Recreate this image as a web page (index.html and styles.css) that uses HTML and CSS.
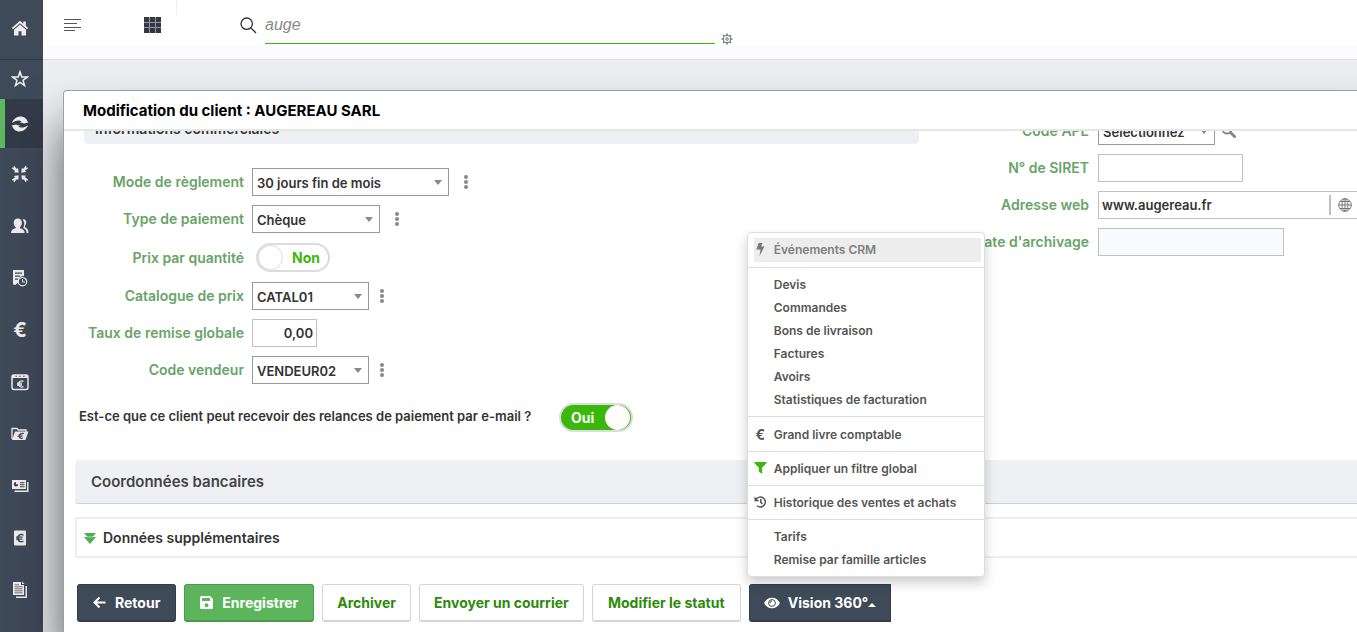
FILE: index.html
```html
<!DOCTYPE html>
<html lang="fr">
<head>
<meta charset="utf-8">
<title>Modification du client : AUGEREAU SARL</title>
<link rel="stylesheet" href="styles.css">
</head>
<body>
<div class="app">
  <nav class="sidebar" aria-label="Menu principal">
    <a href="#" class="side-link side-home" aria-label="Accueil"><svg width="18" height="16" viewBox="0 0 18 16"><path d="M9 .8.800 8l1.200 1.300L9 3.200l7 6.100L17.200 8 14.800 5.900V1.500h-2.500v2.200z"/><path d="M9 4.600 3 9.800V15.500h4.500v-4.300h3v4.300H15V9.800z"/></svg></a>
    <a href="#" class="side-link side-star" aria-label="Favoris"><svg width="18" height="18" viewBox="0 0 18 18"><path fill="none" stroke="currentColor" stroke-width="1.500" d="m9 1.800 1.800 5.100 5.500.1-4.300 3.300 1.500 5.200L9 12.400l-4.500 3.100L6 10.300 1.700 7l5.500-.1z"/></svg></a>
    <a href="#" class="side-link side-active" aria-label="Actualiser"><svg width="20" height="18" viewBox="0 0 20 18"><path d="M2 8C3.500 3.500 8 .8 12.500 1.800c2.700.6 4.300 2.300 5 4.700l1.300.8-4.300 1.200-5-1.300 2.300-.7C9.500 4.700 5.500 5 2 8z"/><path d="M18 10c-1.500 4.500-6 7.200-10.500 6.200-2.700-.6-4.300-2.300-5-4.700l-1.300-.8 4.300-1.200 5 1.300-2.300.7c2.300 1.800 6.300 1.500 9.800-1.500z"/></svg></a>
    <a href="#" class="side-link" aria-label="Regrouper"><svg width="18" height="18" viewBox="0 0 18 18"><g id="arrow"><path d="M7.700 7.700 2.800 7.200l1.300-1.300L.8 3.300l.5-.8 1.400.3-.2-1.500.8-.4 2.500 3.200L7 2.900z"/></g><use href="#arrow" transform="rotate(90 9 9)"/><use href="#arrow" transform="rotate(180 9 9)"/><use href="#arrow" transform="rotate(270 9 9)"/></svg></a>
    <a href="#" class="side-link" aria-label="Tiers"><svg width="18" height="16" viewBox="0 0 18 16"><path d="M11.500 1.500c2.500-.6 4 1 3.700 3.500-.1 1.200-.6 2-1.200 2.700v1.500c2 .8 3.400 2.300 3.600 5.800h-2c-.2-2.500-1.500-4.200-3.500-5.200 1.500-2.300 1.800-6-.6-8.300z"/><path d="M6.800.5c2.600 0 4.100 1.700 4.100 4.200 0 2-1 3.600-2 4.500v1c2.700.7 4.600 1.700 4.800 4.800H0c.2-3.100 2-4.100 4.700-4.800v-1c-1.100-.9-2-2.500-2-4.500C2.700 2.200 4.200.5 6.800.5z"/></svg></a>
    <a href="#" class="side-link" aria-label="Échéances"><svg width="16" height="18" viewBox="0 0 16 18"><path fill-rule="evenodd" d="M1 1h11v6c-4 0-6 2.500-5.700 6L5 14.500 3.500 16 1 15.500zM3 3.500v1.200h7V3.500zm0 3v1.200h5V6.500zm0 3v1.200h3V9.500z"/><circle cx="10.500" cy="12.700" r="4.200" fill="none" stroke="currentColor" stroke-width="1.200"/><path d="M10.500 10v3h2.500" fill="none" stroke="currentColor"/></svg></a>
    <a href="#" class="side-link side-euro" aria-label="Règlements">€</a>
    <a href="#" class="side-link" aria-label="Échéancier"><svg width="18" height="18" viewBox="0 0 18 18"><rect x="1" y="2" width="16" height="14.500" rx="2" fill="none" stroke="currentColor" stroke-width="1.500"/><path fill-rule="evenodd" d="M1 2h16v3H1zm3.500.3v1.500H6V2.300zm3.800 0v1.500h1.500V2.300zm3.800 0v1.500h1.500V2.300z"/><path d="M12.500 8.300c-2.300-1-4.800 0-4.800 2.700s2.500 3.700 4.800 2.700M6 10.200h5.200M6 12h5" fill="none" stroke="currentColor" stroke-width="1.300"/></svg></a>
    <a href="#" class="side-link" aria-label="Dossiers"><svg width="18" height="14" viewBox="0 0 18 14"><path fill="none" stroke="currentColor" stroke-width="1.300" d="M1 12V1.500h5L7.500 3H15v2"/><path fill-rule="evenodd" d="M4 4.500h13.500L14.500 13H1zm9 1.500c-2.500-.8-4.500.2-5 1.800H7v.8h.8v.6H6.500v.8h1.300c.4 1.800 2 2.300 4 1.700v-1.200c-1.200.5-2.200.3-2.500-.5h2l.2-.8H9.200v-.6h2.500l.2-.8H9.500c.5-.8 1.800-1.200 3.200-.7z"/></svg></a>
    <a href="#" class="side-link" aria-label="Fiches"><svg width="18" height="14" viewBox="0 0 18 14"><path fill-rule="evenodd" d="M1 1h14v9H1zm4 2a2.300 2.300 0 1 0 2.300 2.300H5zm4 .3v1h4.500v-1zm0 2v1h4.500v-1zm0 2v1h4.500v-1z"/><path d="M3.500 12.200h13.300V3" fill="none" stroke="currentColor" stroke-width="1.500"/></svg></a>
    <a href="#" class="side-link" aria-label="Factures"><svg width="14" height="18" viewBox="0 0 14 18"><path fill-rule="evenodd" d="M2 1.500h10a1 1 0 0 1 1 1v13a1 1 0 0 1-1 1H2a1 1 0 0 1-1-1v-13a1 1 0 0 1 1-1zm8.500 3.700C7.500 4 5 5.500 4.400 7.500H3v1.200h1.200v.8H3v1.200h1.400C5 13 7.700 14.200 10.500 13v-1.600c-2 .9-3.700.6-4.300-.7h3.200V9.500H6v-.8h3.700V7.500H6.200c.7-1.300 2.300-1.600 4.300-.7z"/></svg></a>
    <a href="#" class="side-link" aria-label="Documents"><svg width="16" height="18" viewBox="0 0 16 18"><path fill-rule="evenodd" d="M1 1h8v3h3v10H1zm1.500 2.500v.8H7v-.8zm0 2v.8h8v-.8zm0 2v.8h8v-.8zm0 2v.8h8v-.8zm0 2v.8h8v-.8z"/><path d="M10 .5 12.500 3H10z"/><path d="M4 16.300h10.200V5" fill="none" stroke="currentColor" stroke-width="1.500"/></svg></a>
  </nav>

  <div class="main">
    <header class="topbar">
      <button class="icon-button burger" aria-label="Replier le menu"><svg width="18" height="14" viewBox="0 0 18 14"><path d="M0 1.500h17M0 5.500h13M0 9.500h17M0 12.500h11" stroke="#555" stroke-width="1"/></svg></button>
      <button class="icon-button apps" aria-label="Applications"><svg width="17" height="16" viewBox="0 0 17 16"><path fill="#8d98a8" d="M0 0h17v16H0z"/><path fill="#35383f" d="M0 0h5v5H0zM6 0h5v5H6zM12 0h5v5h-5zM0 6h5v4H0zM6 6h5v4H6zM12 6h5v4h-5zM0 11h5v5H0zM6 11h5v5H6zM12 11h5v5h-5z"/></svg></button>
      <span class="divider"></span>
      <label class="search-label" for="search" aria-label="Rechercher"><svg width="17" height="17" viewBox="0 0 17 17"><g fill="none" stroke="#333" stroke-width="1.300"><circle cx="6.700" cy="6.700" r="5.700"/><path d="m11 11 5 5"/></g></svg></label>
      <input id="search" class="search" type="text" value="auge">
      <button class="icon-button search-gear" aria-label="Options de recherche"><svg width="12" height="12" viewBox="0 0 12 12"><g fill="none" stroke="#6f7580"><circle cx="6" cy="6" r="3.800"/><circle cx="6" cy="6" r="1.300"/><path stroke-width="1.600" d="M6 .5v1.700M6 9.800v1.700M.5 6h1.700M9.800 6h1.700M2.100 2.100l1.200 1.200M8.700 8.700l1.200 1.200M9.900 2.100 8.700 3.300M3.300 8.700 2.100 9.900"/></g></svg></button>
    </header>

    <main class="modal">
      <h1 class="modal-title">Modification du client : AUGEREAU SARL</h1>
      <div class="modal-body">
        <div class="columns">
          <section class="col-left">
            <h2 class="subsection">Informations commerciales</h2>
            <div class="fields">
              <div class="row"><label class="label" for="mode">Mode de règlement</label><span class="select select-wide"><select id="mode"><option>30 jours fin de mois</option></select></span><button class="dots" aria-label="Options du mode"><i></i><i></i><i></i></button></div>
              <div class="row"><label class="label" for="type">Type de paiement</label><span class="select select-medium"><select id="type"><option>Chèque</option></select></span><button class="dots" aria-label="Options du type"><i></i><i></i><i></i></button></div>
              <div class="row row-toggle"><label class="label" for="quantite">Prix par quantité</label><label class="toggle toggle-off"><input type="checkbox" id="quantite"><span class="knob"></span><span class="toggle-text">Non</span></label></div>
              <div class="row"><label class="label" for="catalogue">Catalogue de prix</label><span class="select select-small"><select id="catalogue"><option>CATAL01</option></select></span><button class="dots" aria-label="Options du catalogue"><i></i><i></i><i></i></button></div>
              <div class="row"><label class="label" for="taux">Taux de remise globale</label><input id="taux" class="input input-rate" type="text" value="0,00"></div>
              <div class="row"><label class="label" for="vendeur">Code vendeur</label><span class="select select-small"><select id="vendeur"><option>VENDEUR02</option></select></span><button class="dots" aria-label="Options du vendeur"><i></i><i></i><i></i></button></div>
            </div>
          </section>
          <section class="col-right">
            <div class="row"><label class="label" for="ape">Code APE</label><span class="select select-small"><select id="ape"><option>Sélectionnez</option></select></span><button class="icon-button lookup" aria-label="Chercher un code"><svg width="16" height="16" viewBox="0 0 16 16"><circle cx="6" cy="6" r="4.500" fill="none" stroke="#888" stroke-width="2"/><path d="m9.500 9.500 4 4" stroke="#888" stroke-width="3" stroke-linecap="round"/></svg></button></div>
            <div class="row"><label class="label" for="siret">N° de SIRET</label><input id="siret" class="input input-siret" type="text"></div>
            <div class="row"><label class="label" for="web">Adresse web</label><span class="web"><input id="web" class="input input-web" type="text" value="www.augereau.fr"><a href="#" class="web-open" aria-label="Ouvrir le site"><svg width="14" height="14" viewBox="0 0 14 14"><g fill="none" stroke="#777"><circle cx="7" cy="7" r="6.300"/><ellipse cx="7" cy="7" rx="3" ry="6.300"/><path d="M.7 7h12.600M7 .7v12.600M2 3.500h10M2 10.500h10"/></g></svg></a></span></div>
            <div class="row"><label class="label" for="archive">Date d'archivage</label><input id="archive" class="input input-date" type="text" readonly></div>
          </section>
        </div>
        <div class="question"><label class="question-text" for="relance">Est-ce que ce client peut recevoir des relances de paiement par e-mail ?</label><label class="toggle toggle-on"><input type="checkbox" id="relance" checked><span class="toggle-text">Oui</span><span class="knob"></span></label></div>
        <h2 class="section">Coordonnées bancaires</h2>
        <button class="accordion"><svg width="12" height="12" viewBox="0 0 12 12"><path fill="#4caf50" d="M0 1h12L8.500 5H12l-6 7L0 5h3.500z"/><path stroke="#fff" stroke-width=".5" d="M3 5h6"/></svg>Données supplémentaires</button>
      </div>

      <footer class="actions">
        <button class="btn btn-icon btn-dark"><svg width="13" height="13" viewBox="0 0 13 13"><path d="M12.500 6.500H1.500M6.500 1.500l-5 5 5 5" fill="none" stroke="#fff" stroke-width="2"/></svg>Retour</button>
        <button class="btn btn-icon btn-green"><svg width="13" height="13" viewBox="0 0 13 13"><path fill="#fff" fill-rule="evenodd" d="M1.500 0H10l3 3v8.500A1.500 1.500 0 0 1 11.500 13h-10A1.500 1.500 0 0 1 0 11.500v-10A1.500 1.500 0 0 1 1.500 0zM2 2v3h8V2zm4.500 5.200a2 2 0 1 0 0 4 2 2 0 0 0 0-4z"/></svg>Enregistrer</button>
        <button class="btn">Archiver</button>
        <button class="btn">Envoyer un courrier</button>
        <button class="btn btn-status">Modifier le statut</button>
        <div class="dropdown">
          <button class="btn btn-dark btn-open" aria-expanded="true"><svg width="16" height="12" viewBox="0 0 16 12"><path fill="#fff" d="M0 6c2-3.500 4.700-5.200 8-5.200S14 2.500 16 6c-2 3.500-4.700 5.200-8 5.200S2 9.500 0 6z"/><circle cx="8" cy="6" r="3.400" fill="none" stroke="#3f4a59"/><path d="M6 6a2 2 0 0 1 2-2" fill="none" stroke="#3f4a59"/></svg>Vision 360°<span class="caret"></span></button>
          <div class="menu">
            <div class="menu-group"><a href="#" class="menu-item menu-hover"><svg width="10" height="13" viewBox="0 0 10 13"><path fill="#777" d="M3 0h4L5.700 3.500H9L4 13l1-6.500H1z"/></svg>Événements CRM</a></div>
            <div class="menu-group"><a href="#" class="menu-item">Devis</a><a href="#" class="menu-item">Commandes</a><a href="#" class="menu-item">Bons de livraison</a><a href="#" class="menu-item">Factures</a><a href="#" class="menu-item">Avoirs</a><a href="#" class="menu-item">Statistiques de facturation</a></div>
            <div class="menu-group menu-ledger"><a href="#" class="menu-item"><span class="menu-icon">€</span>Grand livre comptable</a></div>
            <div class="menu-group"><a href="#" class="menu-item"><svg width="12" height="12" viewBox="0 0 12 12"><path fill="#3ab80b" d="M0 0h12v1.200L7.700 5.500V12L4.300 9.500v-4L0 1.200z"/></svg>Appliquer un filtre global</a></div>
            <div class="menu-group"><a href="#" class="menu-item"><svg width="12" height="12" viewBox="0 0 12 12"><g fill="none" stroke="#555" stroke-width="1.500"><path d="M1.500 3.500A5 5 0 1 1 2.500 9.700M6.300 3v3.500L8 8"/></g><path fill="#555" d="M0 .5v4.800h4.800z"/></svg>Historique des ventes et achats</a></div>
            <div class="menu-group"><a href="#" class="menu-item">Tarifs</a><a href="#" class="menu-item">Remise par famille articles</a></div>
          </div>
        </div>
      </footer>
    </main>
  </div>
</div>
</body>
</html>
```
FILE: styles.css
```css
* { box-sizing: border-box; }
body {
  margin: 0;
  font-family: Inter, "Open Sans", sans-serif;
  font-size: 14px;
  color: #333;
  background: #edeef2;
}
button, input, select { font: inherit; color: inherit; margin: 0; }
button { cursor: pointer; }
a { color: inherit; text-decoration: none; }
svg { display: block; flex: none; }

.app { display: flex; min-height: 100vh; overflow: hidden; }

.sidebar { flex: 0 0 43px; background: #3f4a59; color: #eee; }
.side-link { display: flex; align-items: center; justify-content: center; height: 52px; padding-right: 3px; }
.side-link svg { fill: currentColor; }
.side-home { height: 60px; padding-bottom: 4px; border-bottom: 1px solid #343d4a; }
.side-star { height: 39px; padding-bottom: 2px; }
.side-active { height: 49px; background: #343b48; border-left: 5px solid #5cb85c; padding-right: 8px; }
.side-euro { font-size: 20px; font-weight: 700; }

.main { flex: 1; min-width: 0; display: flex; flex-direction: column; }
.topbar {
  display: flex;
  align-items: flex-start;
  height: 60px;
  background: linear-gradient(#fff 46px, #fcfcfc 46px);
  border-bottom: 1px solid #e0e0e0;
}
.icon-button { border: 0; padding: 0; background: none; }
.burger { margin: 18px 0 0 21px; }
.apps { margin: 17px 0 0 62px; }
.divider { width: 1px; height: 15px; margin-left: 15px; background: #eee; }
.search-label { margin: 17px 8px 0 63px; }
.search {
  width: 450px;
  height: 44px;
  padding: 6px 0 0;
  border: 0;
  border-bottom: 1px solid #3ab80b;
  outline: 0;
  background: none;
  color: #8a8a8a;
  font: italic 16px "Liberation Sans", sans-serif;
}
.search-gear { margin: 33px 0 0 6px; }

.modal {
  position: relative;
  flex: 1;
  margin: 30px -40px 0 20px;
  border: 1px solid #a0a0a0;
  border-bottom: 0;
  border-radius: 4px 4px 0 0;
  background: #fff;
  box-shadow: 0 35px 50px rgba(0, 0, 0, .65);
}
.modal-title {
  margin: 0;
  height: 40px;
  padding-left: 19px;
  border-bottom: 2px solid #e6e6e6;
  font-size: 15px;
  line-height: 39px;
  font-weight: 700;
  color: #000;
}
.modal-body { overflow: hidden; padding: 0 11px; }
.columns { display: grid; grid-template-columns: 645fr 356fr; margin-top: -23px; }
.col-left { padding-left: 9px; }
.col-right { padding-top: 9px; display: flex; flex-direction: column; gap: 9px; }
.subsection {
  margin: 0 0 24px;
  height: 36px;
  padding: 6px 11px 0;
  border-radius: 4px;
  background: #eff0f4;
  font-size: 14px;
  line-height: 30px;
  font-weight: 600;
}
.fields { display: flex; flex-direction: column; gap: 9px; }
.row { display: flex; align-items: center; height: 28px; }
.row-toggle { height: 31px; }
.label { flex: 0 0 160px; margin-right: 8px; padding-bottom: 1px; text-align: right; font-weight: 600; color: #68a468; }
.col-right .label { flex-basis: 170px; margin-right: 9px; }

.select { position: relative; display: block; height: 28px; }
.select select {
  width: 100%;
  height: 100%;
  padding: 1px 24px 0 4px;
  appearance: none;
  border: 1px solid #999;
  border-radius: 0;
  background: #fff;
  font-size: 13px;
  font-weight: 600;
  text-overflow: clip;
}
.select::after {
  content: "";
  position: absolute;
  right: 7px;
  top: 12px;
  border: 4px solid transparent;
  border-top: 5px solid #888;
  border-bottom: 0;
  pointer-events: none;
}
.select-wide { width: 197px; }
.select-medium { width: 128px; }
.select-small { width: 117px; }
.col-right .select select { padding-right: 16px; }
.dots { display: flex; flex-direction: column; gap: 1px; margin-left: 15px; padding: 0; border: 0; background: none; }
.select-small + .dots { margin-left: 11px; }
.dots i { width: 4px; height: 4px; border-radius: 2px; background: #888; }
.lookup { margin-left: 6px; }

.input { height: 28px; padding: 0 4px; border: 1px solid #c0c0c0; border-radius: 0; background: #fff; font-size: 13px; font-weight: 600; outline: 0; }
.input-rate { width: 65px; padding-right: 3px; text-align: right; }
.input-siret { width: 145px; }
.input-date { width: 186px; background: #f9fafd; }
.web { display: flex; align-items: center; width: 262px; height: 28px; border: 1px solid #c0c0c0; }
.input-web { width: 230px; height: 26px; border: 0; padding: 0 3px; }
.web-open { padding: 3px 0 3px 7px; border-left: 2px solid #c0c0c0; }

.toggle { display: flex; align-items: center; justify-content: space-between; height: 29px; width: 74px; border: 2px solid #dcdcdc; border-radius: 15px; font-weight: 700; }
.toggle input { position: absolute; opacity: 0; width: 1px; height: 1px; }
.knob { width: 25px; height: 25px; border-radius: 50%; background: #fff; }
.toggle-off { margin-left: 4px; background: #fff; color: #3ab80b; padding-right: 8px; }
.toggle-off .knob { border: 1px solid #dcdcdc; }
.toggle-on { background: #3ab80b; color: #fff; padding: 0 1px 0 10px; }

.question { display: flex; align-items: center; height: 29px; margin: 19px 0 28px 4px; }
.question-text { min-width: 480px; padding-bottom: 4px; font-size: 13px; font-weight: 600; }
.section {
  margin: 0;
  height: 44px;
  padding-left: 16px;
  border-bottom: 1px solid #d0d0d0;
  border-radius: 4px;
  background: #eff0f4;
  font-size: 15px;
  line-height: 44px;
  font-weight: 600;
  color: #444;
}
.accordion {
  display: flex;
  align-items: center;
  gap: 7px;
  width: 100%;
  height: 41px;
  margin-top: 13px;
  padding: 0 7px;
  border: 2px solid #eee;
  background: #fff;
  font-weight: 600;
}

.actions { display: flex; gap: 8px; padding: 26px 13px 8px; }
.btn {
  display: flex;
  align-items: center;
  justify-content: center;
  gap: 8px;
  height: 38px;
  padding: 0 14px;
  border: 1px solid #d5d5d5;
  border-bottom-width: 2px;
  border-radius: 3px;
  background: #fff;
  color: #2d8a0b;
  font-weight: 700;
  white-space: nowrap;
}
.btn-icon { gap: 9px; padding: 0 15px; }
.btn-status { min-width: 149px; }
.btn-dark { background: #3f4a59; border-color: #353f4c; color: #fff; }
.btn-green { background: #5cb55c; border-color: #4a9c4a; color: #fff; }
.btn-open { border-radius: 3px 0 0 3px; }
.caret { margin: 4px 0 0 -8px; border: 4px solid transparent; border-bottom-color: #fff; border-top: 0; }

.dropdown { position: relative; }
.menu {
  position: absolute;
  left: -2px;
  bottom: calc(100% + 7px);
  width: 238px;
  border: 1px solid #ddd;
  border-radius: 4px;
  background: #fff;
  box-shadow: 0 6px 12px rgba(0, 0, 0, .2);
  font-size: 12px;
  font-weight: 600;
  color: #555;
}
.menu-group { padding: 5px 3px 5px 6px; }
.menu-group + .menu-group { border-top: 1px solid #ddd; }
.menu-group.menu-ledger { padding-top: 6px; }
.menu-item { position: relative; display: block; height: 23px; padding-left: 20px; line-height: 23px; white-space: nowrap; }
.menu-item svg, .menu-icon { position: absolute; left: 0; top: 5px; width: 13px; }
.menu-icon { top: 0; text-align: center; font-size: 14px; font-weight: 700; }
.menu-hover { height: 24px; background: #ededed; color: #808080; }
```
